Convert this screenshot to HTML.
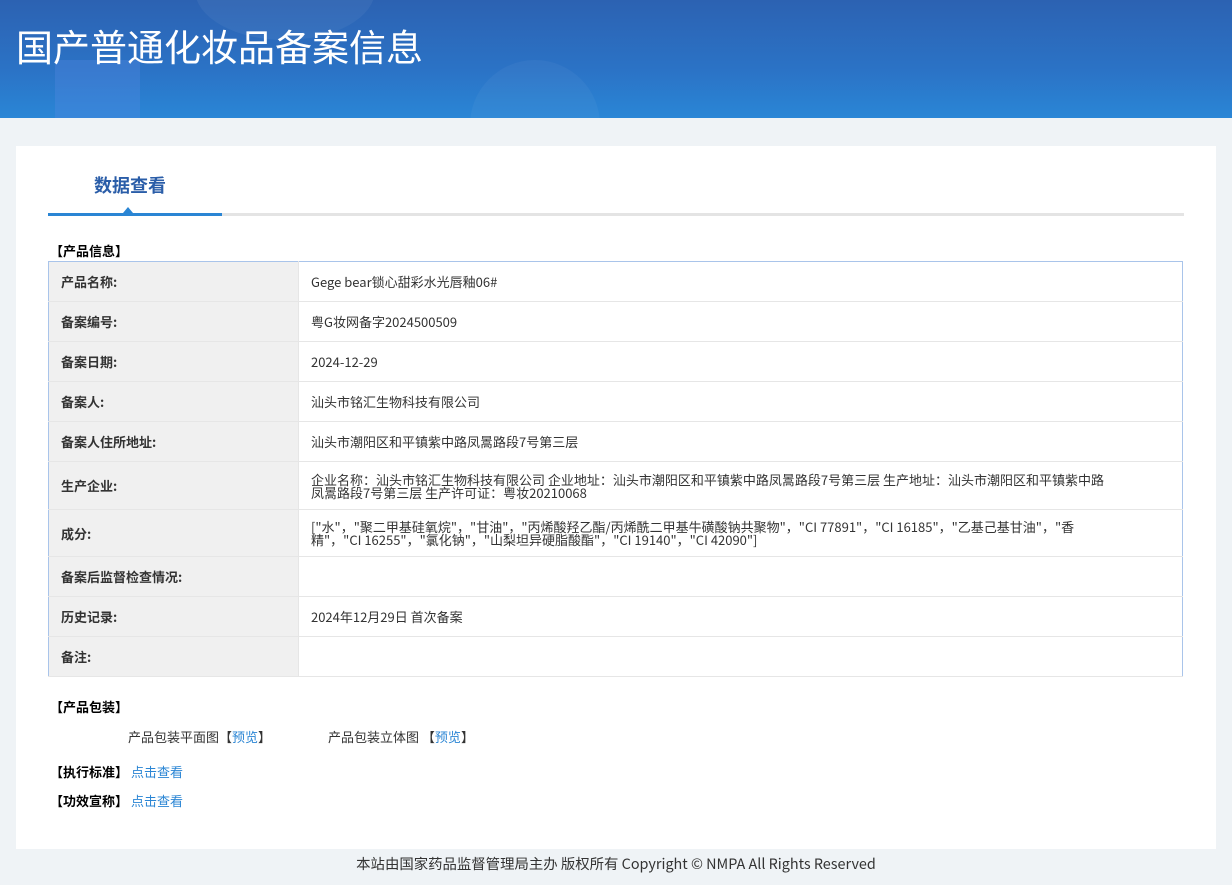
<!DOCTYPE html>
<html><head><meta charset="utf-8"><style>
*{margin:0;padding:0;box-sizing:border-box}
body{width:1232px;height:885px;background:#eff3f6;font-family:"Noto Sans CJK SC","Liberation Sans",sans-serif;font-size:13px;color:#333;position:relative;overflow:hidden}
.hd{position:absolute;left:0;top:0;width:1232px;height:118px;background:linear-gradient(180deg,#2c62b2 0%,#2b73c6 60%,#2a86d6 100%);overflow:hidden}
.hd h1{position:absolute;left:16px;top:19px;font-size:37px;font-weight:normal;color:#fff;font-family:"Noto Sans CJK SC",sans-serif;line-height:52px}
.sh1{position:absolute;left:55px;top:60px;width:85px;height:80px;background:rgba(90,140,230,.3)}
.sh2{position:absolute;left:195px;top:-60px;width:180px;height:100px;border-radius:50%;background:rgba(255,255,255,.05)}
.sh3{position:absolute;left:470px;top:60px;width:130px;height:130px;border-radius:50%;background:rgba(255,255,255,.04)}
.card{position:absolute;left:16px;top:146px;width:1200px;height:703px;background:#fff}
.tab{position:absolute;left:78px;top:26px;font-size:18px;font-weight:bold;color:#2a5da8}
.line{position:absolute;left:32px;top:67px;width:1136px;height:3px;background:#e4e4e4}
.line2{position:absolute;left:32px;top:67px;width:174px;height:3px;background:#2a85d4}
.tri{position:absolute;left:107px;top:61px;width:0;height:0;border-left:5px solid transparent;border-right:5px solid transparent;border-bottom:6px solid #2a85d4}
.sec{position:absolute;left:34px;font-weight:bold;color:#000;font-size:13px;line-height:16px}
table{position:absolute;left:32px;top:115px;width:1135px;border-collapse:collapse;border:1px solid #a9c4ea}
td{border-bottom:1px solid #e6e6e6;height:40px;padding:0 12px;vertical-align:middle;line-height:13px}
td.l{width:250px;background:#f0f0f0;font-weight:bold;color:#333;border-right:1px solid #e6e6e6}
a{color:#2a85d4;text-decoration:none}
.ft{position:absolute;top:855px;left:0;width:1232px;text-align:center;font-size:14.4px;color:#333;line-height:18px}
</style></head><body>
<div class="hd"><div class="sh1"></div><div class="sh2"></div><div class="sh3"></div><h1>国产普通化妆品备案信息</h1></div>
<div class="card">
<div class="tab">数据查看</div>
<div class="line"></div><div class="line2"></div><div class="tri"></div>
<div class="sec" style="top:97px">【产品信息】</div>
<table>
<tr><td class="l">产品名称:</td><td>Gege bear锁心甜彩水光唇釉06#</td></tr>
<tr><td class="l">备案编号:</td><td>粤G妆网备字2024500509</td></tr>
<tr><td class="l">备案日期:</td><td>2024-12-29</td></tr>
<tr><td class="l">备案人:</td><td>汕头市铭汇生物科技有限公司</td></tr>
<tr><td class="l">备案人住所地址:</td><td>汕头市潮阳区和平镇紫中路凤暠路段7号第三层</td></tr>
<tr><td class="l" style="height:48px">生产企业:</td><td style="padding-right:68px">企业名称：汕头市铭汇生物科技有限公司 企业地址：汕头市潮阳区和平镇紫中路凤暠路段7号第三层 生产地址：汕头市潮阳区和平镇紫中路凤暠路段7号第三层 生产许可证：粤妆20210068</td></tr>
<tr><td class="l" style="height:47px">成分:</td><td style="padding-right:80px">["水"，"聚二甲基硅氧烷"，"甘油"，"丙烯酸羟乙酯/丙烯酰二甲基牛磺酸钠共聚物"，"CI 77891"，"CI 16185"，"乙基己基甘油"，"香精"，"CI 16255"，"氯化钠"，"山梨坦异硬脂酸酯"，"CI 19140"，"CI 42090"]</td></tr>
<tr><td class="l">备案后监督检查情况:</td><td></td></tr>
<tr><td class="l">历史记录:</td><td>2024年12月29日 首次备案</td></tr>
<tr><td class="l">备注:</td><td></td></tr>
</table>
<div class="sec" style="top:553px">【产品包装】</div>
<div style="position:absolute;left:112px;top:583px;line-height:16px">产品包装平面图【<a>预览</a>】</div>
<div style="position:absolute;left:312px;top:583px;line-height:16px">产品包装立体图 【<a>预览</a>】</div>
<div class="sec" style="top:618px">【执行标准】 <a style="font-weight:normal">点击查看</a></div>
<div class="sec" style="top:647px">【功效宣称】 <a style="font-weight:normal">点击查看</a></div>
</div>
<div class="ft">本站由国家药品监督管理局主办 版权所有 Copyright © NMPA All Rights Reserved</div>
</body></html>
